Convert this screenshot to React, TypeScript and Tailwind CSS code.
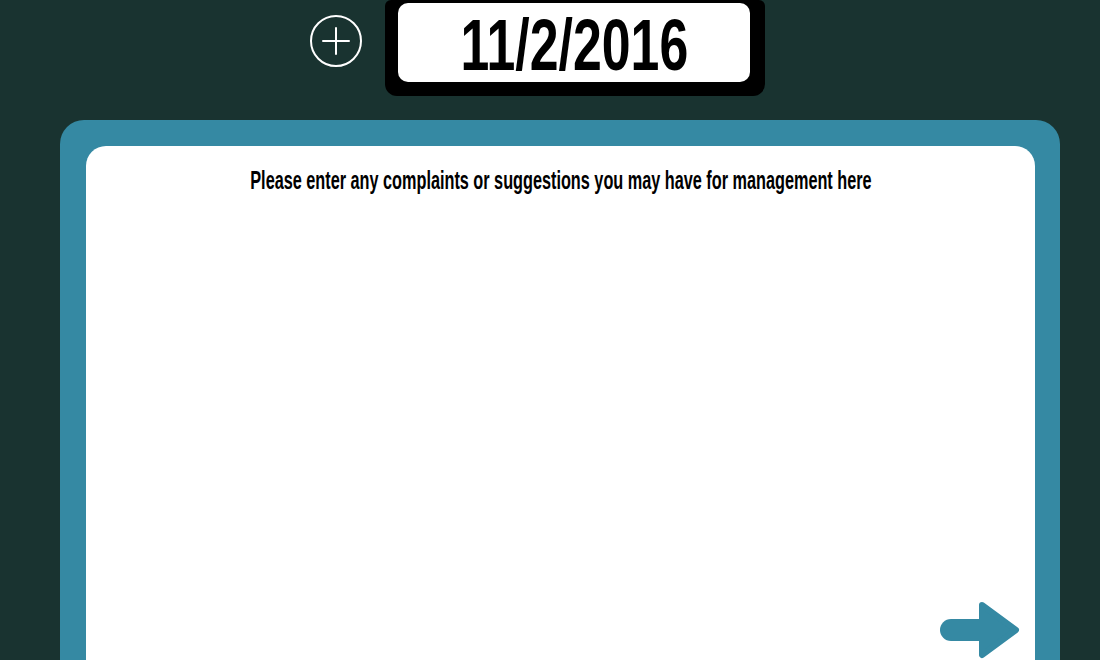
import React from "react"

const font = { fontFamily: '"Liberation Sans", Arial, sans-serif' }

const App: React.FC = () => {
    return (
        <div className="h-[660px] w-[1100px] overflow-hidden bg-[#193330]" style={font}>
            {/* header: add button + date */}
            <div className="flex h-[120px] items-start pl-[310px]">
                <button className="mt-[15px] flex h-[52px] w-[52px] items-center justify-center rounded-full border-2 border-white">
                    <svg width="30" height="30" viewBox="0 0 30 30" stroke="white" strokeWidth="2" strokeLinecap="round">
                        <path d="M15 2v26M2 15h26" />
                    </svg>
                </button>
                <div className="ml-[23px] rounded-b-[12px] rounded-t-[6px] bg-black pb-[14px] pl-[13px] pr-[15px] pt-[3px]">
                    <div className="flex h-[79px] w-[352px] items-center justify-center rounded-[10px] bg-white">
                        <span className="inline-block origin-center scale-x-[0.71] pt-[4px] text-[73px] font-bold leading-none text-black">11/2/2016</span>
                    </div>
                </div>
            </div>

            {/* complaints panel */}
            <div className="ml-[60px] h-[560px] w-[1000px] rounded-t-[24px] bg-[#3589a3] pl-[26px] pr-[25px] pt-[26px]">
                <div className="flex h-[534px] flex-col rounded-t-[20px] bg-white">
                    <div className="mt-[20px] flex justify-center">
                        <p className="inline-block origin-center scale-x-[0.65] whitespace-nowrap text-[25px] font-bold leading-[28px] text-black">
                            Please enter any complaints or suggestions you may have for management here
                        </p>
                    </div>
                    <div className="flex-1" />
                    <div className="mb-[21px] mr-[15px] flex justify-end">
                        <svg width="80" height="58" viewBox="0 0 80 58">
                            <path d="M11 18h30v22H11a11 11 0 0 1 0-22z" fill="#3589a3" />
                            <path d="M42 4l34 25-34 25z" fill="#3589a3" stroke="#3589a3" strokeWidth="6" strokeLinejoin="round" />
                        </svg>
                    </div>
                </div>
            </div>
        </div>
    )
}

export default App
